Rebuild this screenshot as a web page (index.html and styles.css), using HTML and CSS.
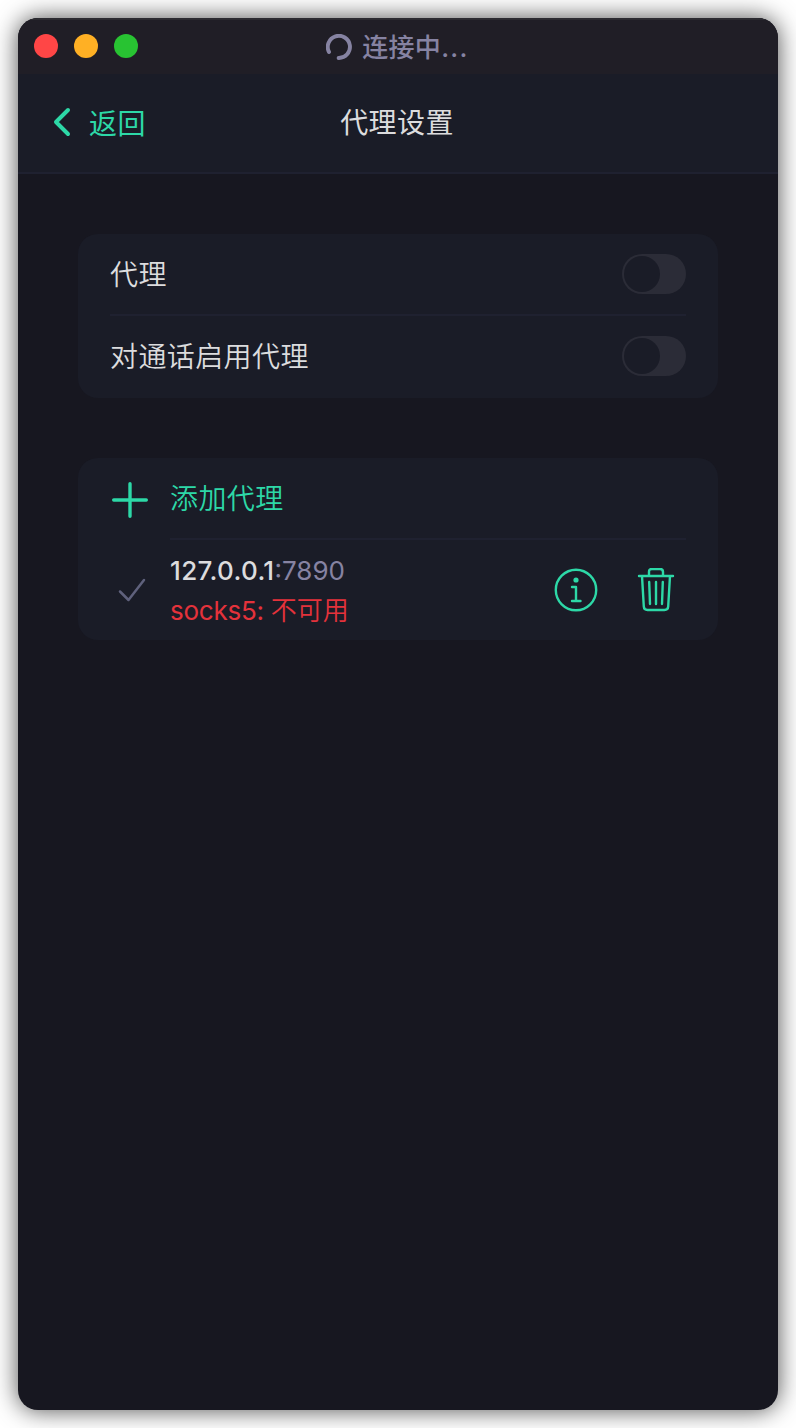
FILE: index.html
```html
<!DOCTYPE html>
<html lang="zh-CN">
<head>
<meta charset="utf-8">
<title>代理设置</title>
<link rel="stylesheet" href="styles.css">
</head>
<body>
<main class="window">
  <div class="titlebar">
    <div class="lights"><i class="light red"></i><i class="light yellow"></i><i class="light green"></i></div>
    <div class="status">
      <svg width="26" height="26" viewBox="0 0 26 26"><path d="M3 18A11.1 11.1 0 1 1 12.6 24" fill="none" stroke="currentColor" stroke-width="3.9" stroke-linecap="round"/></svg>
      <span>连接中<span class="dots">...</span></span>
    </div>
  </div>
  <header class="header">
    <div class="back">
      <svg width="20" height="32" viewBox="0 0 20 32"><path d="M16 4L4 16l12 12" fill="none" stroke="currentColor" stroke-width="4" stroke-linecap="round" stroke-linejoin="round"/></svg>
      <span>返回</span>
    </div>
    <h1 class="title">代理设置</h1>
  </header>
  <div class="content">
    <section class="card">
      <div class="row"><span class="label">代理</span><span class="switch"></span></div>
      <div class="divider"></div>
      <div class="row last"><span class="label">对通话启用代理</span><span class="switch"></span></div>
    </section>
    <section class="card">
      <div class="row add">
        <svg class="lead" width="40" height="40" viewBox="0 0 40 40"><path d="M3.700 20h32.600M20 3.700v32.600" fill="none" stroke="currentColor" stroke-width="3.4" stroke-linecap="round"/></svg>
        <span class="label">添加代理</span>
      </div>
      <div class="divider inset"></div>
      <div class="proxy">
        <svg class="check" width="40" height="40" viewBox="0 0 40 40"><path d="M10 21.500l8.500 8.500L34 10" fill="none" stroke="currentColor" stroke-width="2.500" stroke-linecap="round" stroke-linejoin="round"/></svg>
        <div class="details">
          <div class="address"><span class="host">127.0.0.1</span><span class="port">:7890</span></div>
          <div class="state"><span class="type">socks5: </span>不可用</div>
        </div>
        <div class="actions">
          <svg width="44" height="44" viewBox="0 0 44 44" fill="none" stroke="currentColor" stroke-width="2.400" stroke-linecap="round" stroke-linejoin="round"><circle cx="22" cy="22" r="20.200"/><circle cx="22" cy="12" r="2.600" fill="currentColor" stroke="none"/><path d="M18 19h4v14M18 33h8.500"/></svg>
          <svg width="44" height="44" viewBox="0 0 44 44" fill="none" stroke="currentColor" stroke-width="2.400" stroke-linecap="round" stroke-linejoin="round"><path d="M5 8h34M15 7.500V4q0-3 3-3h8q3 0 3 3v3.500M8 8l1.800 30.500Q10 42 13.500 42h17Q34 42 34.200 38.500L36 8M15.200 14l.8 22M22 14v22M28.800 14L28 36"/></svg>
        </div>
      </div>
    </section>
  </div>
</main>
</body>
</html>
```
FILE: styles.css
```css
* { box-sizing: border-box; }
body {
  margin: 0;
  padding: 18px;
  background: #fff;
  font-family: Inter, "Noto Sans CJK SC", sans-serif;
  overflow: hidden;
}
svg { display: block; flex: none; }
.window {
  height: 1392px;
  border-radius: 20px;
  background: #171720;
  overflow: hidden;
  box-shadow: 0 0 24px rgba(0, 0, 0, .7);
}
.titlebar {
  height: 56px;
  padding: 2px 16px 0;
  display: grid;
  grid-template-columns: 1fr auto 1fr;
  align-items: center;
  background: #201e26;
  box-shadow: inset 0 2px #2c2b31;
}
.lights { display: flex; gap: 16px; margin-top: -2px; }
.light { width: 24px; height: 24px; border-radius: 50%; }
.red { background: #ff4646; }
.yellow { background: #ffb024; }
.green { background: #28c332; }
.status {
  display: flex;
  align-items: center;
  gap: 10px;
  color: #8683a2;
  font-size: 26px;
  font-weight: 500;
  line-height: 36px;
}
.status > span { padding: 1px 1px 0 0; letter-spacing: .3px; }
.dots { letter-spacing: 1.3px; }
.header {
  height: 100px;
  padding: 0 34px;
  display: grid;
  grid-template-columns: 1fr auto 1fr;
  align-items: center;
  background: #1a1c27;
  border-bottom: 2px solid #1f2130;
  font-size: 28px;
  letter-spacing: .4px;
}
.back { display: flex; align-items: center; gap: 17px; color: #2dd8a7; margin-top: -2px; }
.title { margin: -4px 2px 0 0; color: #dcdcde; font-size: 28px; font-weight: 400; }
.content { padding: 60px; display: flex; flex-direction: column; gap: 60px; }
.card { padding: 0 32px; border-radius: 20px; background: #1a1c27; }
.row {
  height: 80px;
  display: flex;
  align-items: center;
  justify-content: space-between;
  color: #dcdcde;
  font-size: 28px;
  font-weight: 350;
  letter-spacing: .4px;
}
.label { margin-top: -2px; }
.last { height: 82px; padding-bottom: 2px; }
.switch {
  width: 64px;
  height: 40px;
  padding: 2px;
  border-radius: 20px;
  background: #2b2c37;
}
.switch::before {
  content: "";
  display: block;
  width: 36px;
  height: 36px;
  border-radius: 50%;
  background: #1a1c27;
}
.divider { height: 2px; background: #1f2130; }
.add { justify-content: flex-start; gap: 20px; color: #2dd8a7; }
.lead { margin-top: 4px; }
.inset { margin-left: 60px; }
.proxy { height: 100px; display: flex; gap: 20px; align-items: center; font-size: 26px; }
.check { color: #5f617c; }
.details { flex: 1; line-height: 40px; padding-top: 2px; }
.host { color: #dcdcde; font-weight: 500; letter-spacing: .35px; }
.port { color: #8683a2; }
.state { color: #e4323b; font-weight: 350; }
.type { font-weight: 400; letter-spacing: -.25px; }
.actions { display: flex; gap: 36px; padding-right: 8px; color: #2dd8a7; }
```
